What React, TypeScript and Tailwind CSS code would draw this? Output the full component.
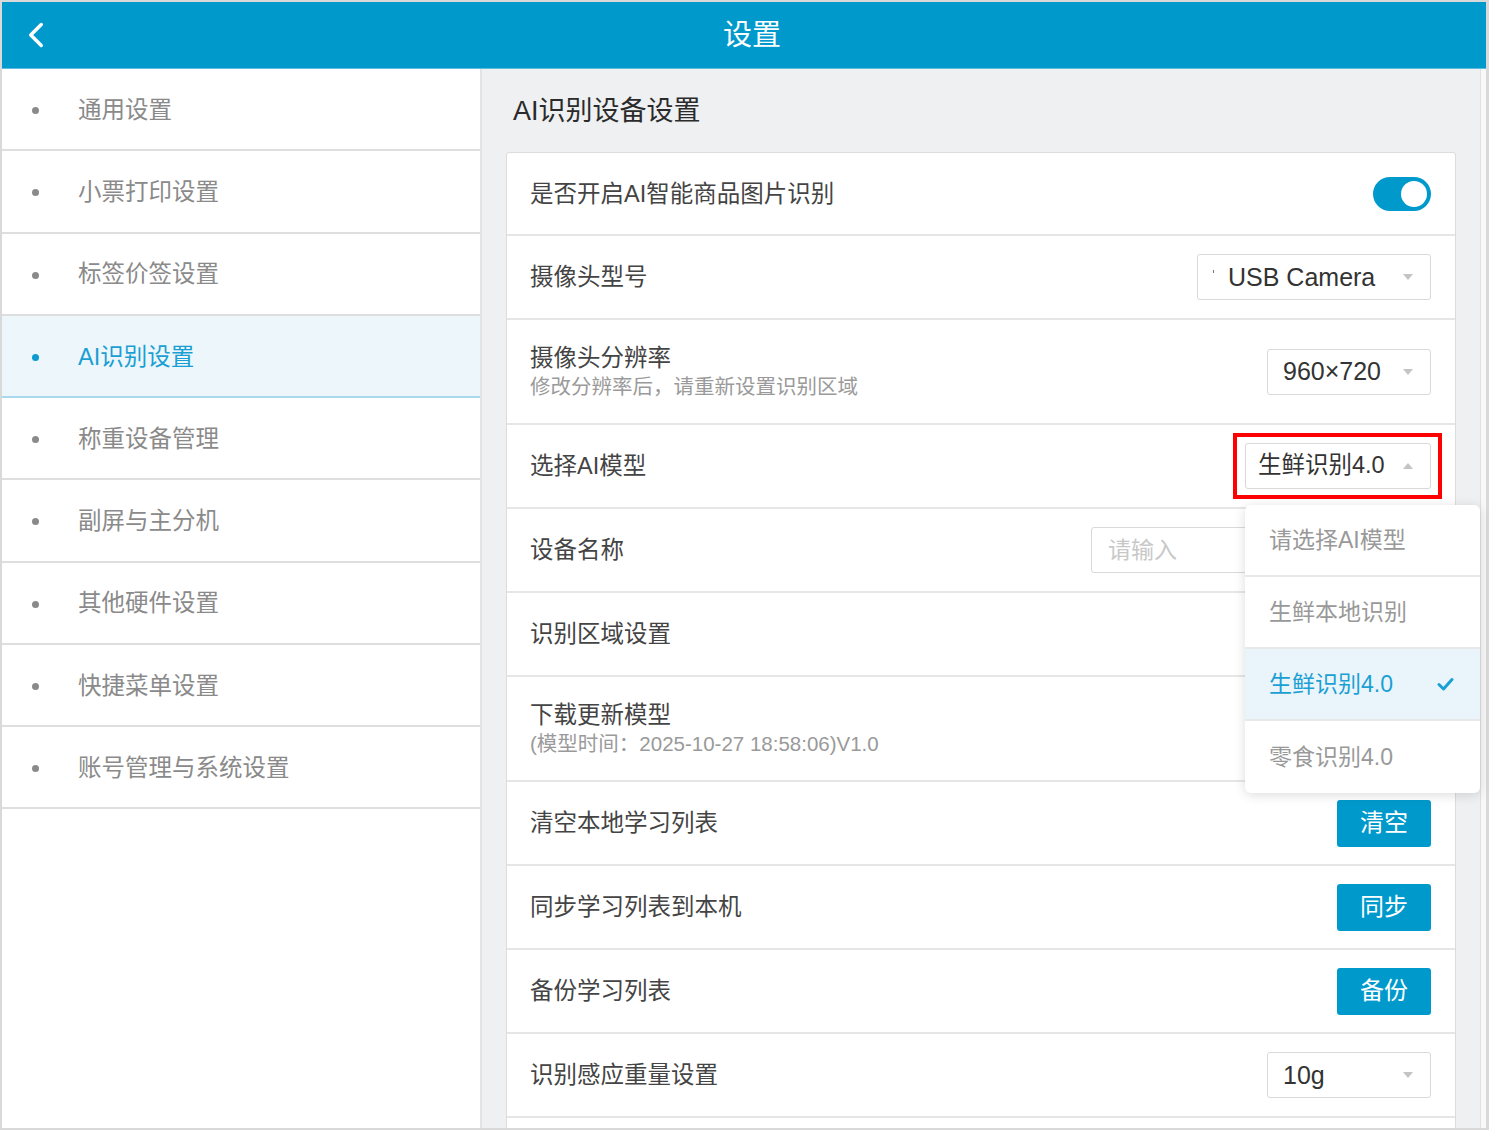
import { ChevronLeft } from 'lucide-react';

const font = { fontFamily: '"Liberation Sans", "Noto Sans CJK SC", sans-serif' };

const menu = [
    '通用设置',
    '小票打印设置',
    '标签价签设置',
    'AI识别设置',
    '称重设备管理',
    '副屏与主分机',
    '其他硬件设置',
    '快捷菜单设置',
    '账号管理与系统设置',
];

const modelOptions = ['请选择AI模型', '生鲜本地识别', '生鲜识别4.0', '零食识别4.0'];

const Caret = ({ up = false }: { up?: boolean }) => (
    <span
        className={`w-0 h-0 border-l-[5px] border-r-[5px] border-l-transparent border-r-transparent ${
            up ? 'border-b-[6px] border-b-[#c4c4c4]' : 'border-t-[6px] border-t-[#c4c4c4]'
        }`}
    />
);

const Select = ({ value, width, up = false, tick = false, cjk = false }: { value: string; width: string; up?: boolean; tick?: boolean; cjk?: boolean }) => (
    <div className={`${width} h-[46px] border border-[#d9d9d9] rounded-[3px] bg-white flex items-center justify-between pl-[12px] pr-[17px]`}>
        <span className={`flex items-center text-[#333] leading-none ${cjk ? 'text-[23.5px]' : 'text-[25px] pl-[3px]'}`}>
            {tick && <span className="w-px h-[3px] bg-[#777] mr-[14px] -mt-[12px]" />}
            {value}
        </span>
        <Caret up={up} />
    </div>
);

const Button = ({ label }: { label: string }) => (
    <button className="w-[94px] h-[47px] bg-[#0099cc] rounded-[3px] text-white text-[24px] leading-none">{label}</button>
);

const Row = ({ label, sub, tall = false, first = false, children }: { label: string; sub?: string; tall?: boolean; first?: boolean; children?: React.ReactNode }) => (
    <div
        className={`relative flex items-center justify-between pl-[23px] pr-[24px] border-b-2 border-[#e6e6e6] ${
            tall ? 'h-[105px]' : first ? 'h-[83px]' : 'h-[84px]'
        }`}
    >
        <div className="flex flex-col">
            <span className="text-[23.5px] text-[#444] leading-[30px]">{label}</span>
            {sub && <span className="text-[20.5px] text-[#9a9a9a] leading-[28px]">{sub}</span>}
        </div>
        {children}
    </div>
);

export default function App() {
    return (
        <div style={font} className="w-[1489px] h-[1130px] border-2 border-r-[3px] border-[#d9d9d9] flex flex-col overflow-hidden bg-white">
            {/* header */}
            <div className="h-[67px] shrink-0 bg-[#0099cc] border-b border-[#5cbde0] relative flex items-center justify-center pl-[16px]">
                <ChevronLeft className="absolute left-[13px] top-[12px] text-white" size={42} strokeWidth={2} />
                <span className="text-[29px] text-white leading-none">设置</span>
            </div>

            <div className="flex flex-1 min-h-0">
                {/* sidebar */}
                <div className="w-[480px] shrink-0 bg-white border-r-2 border-[#e3e3e3]">
                    {menu.map((item, i) => {
                        const active = i === 3;
                        return (
                            <div
                                key={item}
                                className={`h-[82.25px] flex items-center pt-[3px] border-b-2 ${
                                    active ? 'bg-[#edf6fa] border-[#a9d9ec]' : 'border-[#dedede]'
                                }`}
                            >
                                <span className={`w-[7px] h-[7px] rounded-full ml-[30px] ${active ? 'bg-[#0a9bd0]' : 'bg-[#8a8a8a]'}`} />
                                <span className={`ml-[39px] text-[23.5px] leading-none ${active ? 'text-[#1a9fd3]' : 'text-[#8a8a8a]'}`}>{item}</span>
                            </div>
                        );
                    })}
                </div>

                {/* main */}
                <div className="flex-1 flex bg-[#eff0f2] min-w-0">
                    <div className="flex-1 pl-[24px] pr-[24px] pt-[20px]">
                        <div className="h-[44px] flex items-center pl-[7px] text-[27px] text-[#2b2b2b] leading-none">AI识别设备设置</div>
                        <div className="mt-[19px] bg-white border border-[#dcdcdc] rounded-[3px]">
                            <Row label="是否开启AI智能商品图片识别" first>
                                <div className="w-[58px] h-[34px] rounded-full bg-[#0099cc] flex items-center justify-end pr-[4px]">
                                    <span className="w-[26px] h-[26px] rounded-full bg-white" />
                                </div>
                            </Row>
                            <Row label="摄像头型号">
                                <Select value="USB Camera" width="w-[234px]" tick />
                            </Row>
                            <Row label="摄像头分辨率" sub="修改分辨率后，请重新设置识别区域" tall>
                                <Select value="960×720" width="w-[164px]" />
                            </Row>
                            <Row label="选择AI模型">
                                <div className="relative">
                                    <div className="absolute -left-[12px] -right-[11px] -top-[10px] -bottom-[10px] border-4 border-[#ff0000]" />
                                    <Select value="生鲜识别4.0" width="w-[186px]" up cjk />
                                </div>
                            </Row>
                            <Row label="设备名称">
                                <div className="w-[340px] h-[46px] border border-[#d9d9d9] rounded-[3px] flex items-center pl-[16px] text-[23px] text-[#c8c8c8] leading-none">
                                    请输入
                                </div>
                            </Row>
                            <Row label="识别区域设置" />
                            <Row label="下载更新模型" sub="(模型时间：2025-10-27 18:58:06)V1.0" tall />
                            <Row label="清空本地学习列表">
                                <Button label="清空" />
                            </Row>
                            <Row label="同步学习列表到本机">
                                <Button label="同步" />
                            </Row>
                            <Row label="备份学习列表">
                                <Button label="备份" />
                            </Row>
                            <Row label="识别感应重量设置">
                                <Select value="10g" width="w-[164px]" />
                            </Row>
                            <Row label="" />
                        </div>
                    </div>
                    <div className="w-[6px] shrink-0 bg-[#f8f8f8] border-l border-[#e0e0e0]" />
                </div>
            </div>

            {/* open model dropdown */}
            <div className="absolute left-[1245px] top-[505px] w-[235px] bg-white rounded-[6px] shadow-[0_2px_12px_rgba(0,0,0,0.14)] overflow-hidden">
                {modelOptions.map((opt, i) => {
                    const selected = i === 2;
                    return (
                        <div
                            key={opt}
                            className={`h-[72px] flex items-center justify-between pl-[24px] pr-[26px] ${
                                i < modelOptions.length - 1 ? 'border-b-2 border-[#e8e8e8]' : ''
                            } ${selected ? 'bg-[#eaf5fb]' : ''}`}
                        >
                            <span className={`text-[23px] leading-none ${selected ? 'text-[#1aa0d4]' : 'text-[#999]'}`}>{opt}</span>
                            {selected && (
                                <svg width="17" height="14" viewBox="0 0 17 14" fill="none">
                                    <path d="M2 7.5 L6.5 12 L15 2.5" stroke="#1aa0d4" strokeWidth="3" strokeLinecap="round" strokeLinejoin="round" />
                                </svg>
                            )}
                        </div>
                    );
                })}
            </div>
        </div>
    );
}
